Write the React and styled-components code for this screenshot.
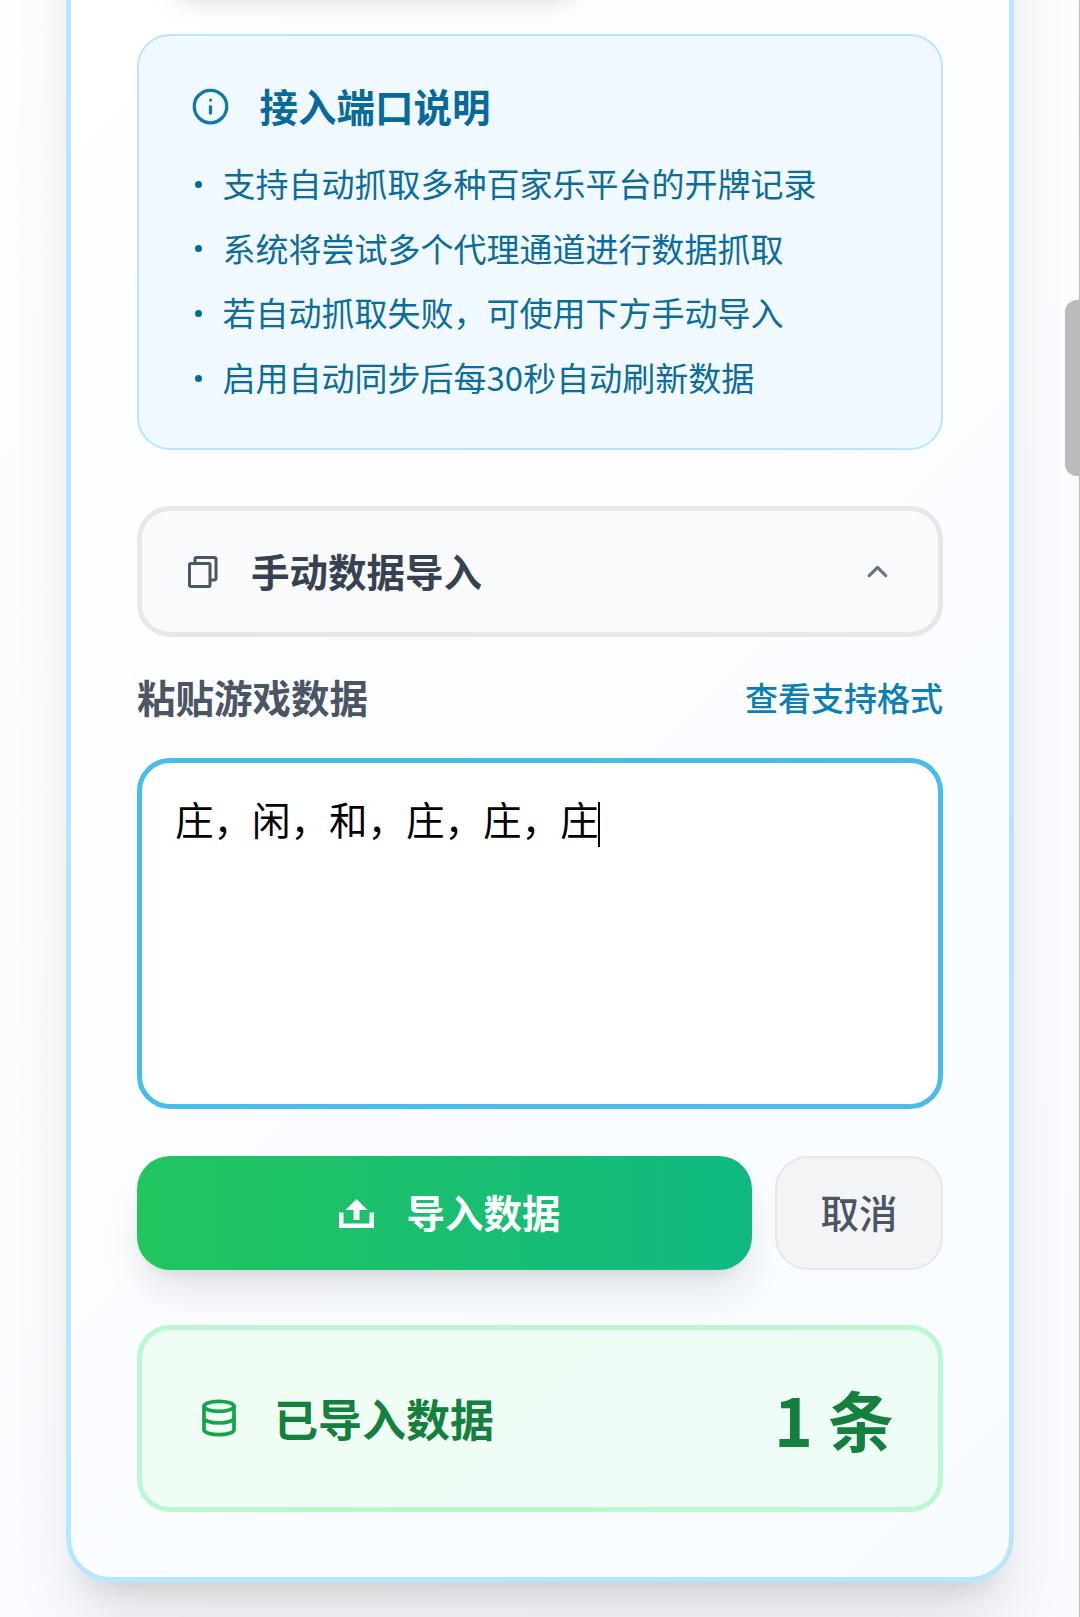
import React from "react";
import styled, { createGlobalStyle } from "styled-components";
import { Info, ChevronUp, Database } from "lucide-react";

const GlobalStyle = createGlobalStyle`
  html, body {
    margin: 0;
    padding: 0;
    height: 1617px;
    overflow: hidden;
    background: #fafbff;
  }
  * {
    box-sizing: border-box;
  }
  body {
    font-family: "Noto Sans CJK SC", "Noto Sans", sans-serif;
  }
`;

const Page = styled.div`
  position: relative;
  height: 1617px;
  overflow: hidden;
  background: linear-gradient(135deg, #fdfdff 0%, #f9fafe 100%);
`;

// the page is scrolled, so the top of the card sits above the window
const Scroller = styled.div`
  margin-top: -201px;
  padding: 0 66px;
`;

const Card = styled.div`
  border: 5px solid #bae6fd;
  border-radius: 44px;
  background: linear-gradient(135deg, #ffffff 0%, #f7fbff 100%);
  box-shadow: 0 55px 69px -14px rgba(0, 0, 0, 0.1),
    0 22px 27px -16px rgba(0, 0, 0, 0.1);
  padding: 0 66px 65px;
`;

const CutOffButton = styled.div`
  width: 420px;
  height: 190px;
  margin: 0 0 40px 28px;
  background: #fff;
  border-radius: 33px;
  box-shadow: 0 11px 22px rgba(0, 0, 0, 0.1);
`;

const InfoBox = styled.section`
  height: 416px;
  padding: 41px 50px 40px 55px;
  border: 2.5px solid #bae6fd;
  border-radius: 33px;
  background: #f0f9ff;
`;

const InfoTitle = styled.h3`
  display: flex;
  align-items: center;
  gap: 29.5px;
  margin: 0 0 18px -3px;
  font-size: 38.5px;
  line-height: 56px;
  font-weight: 700;
  color: #086a99;

  svg {
    margin-top: 3px;
  }
`;

const InfoList = styled.ul`
  list-style: none;
  margin: 0;
  padding: 0 0 0 1px;
`;

const InfoItem = styled.li`
  display: flex;
  align-items: center;
  gap: 20.5px;
  height: 64.6px;
  font-size: 33px;
  color: #0c6c9b;

  &::before {
    content: "";
    width: 7px;
    height: 7px;
    border-radius: 50%;
    background: #086a99;
    transform: translateY(1px);
  }
`;

const Collapse = styled.button`
  display: flex;
  align-items: center;
  width: 100%;
  height: 131px;
  margin-top: 56px;
  padding: 0 44px 0 46px;
  border: 5px solid #e5e7eb;
  border-radius: 33px;
  background: #f9fafb;
  color: #374151;
  font: inherit;
  font-size: 38.5px;
  font-weight: 700;
`;

const CollapseLabel = styled.span`
  flex: 1;
  margin-left: 33px;
  padding-bottom: 4px;
  text-align: left;
`;

const LabelRow = styled.div`
  display: flex;
  align-items: center;
  justify-content: space-between;
  height: 56px;
  margin-top: 31px;
`;

const FieldLabel = styled.label`
  font-size: 38.5px;
  font-weight: 700;
  color: #4b5563;
`;

const FormatLink = styled.a`
  padding-top: 1px;
  font-size: 33px;
  font-weight: 500;
  color: #0a80b5;
`;

const TextBox = styled.div`
  height: 351px;
  margin-top: 34px;
  padding: 27px 33px;
  border: 5px solid #4abcec;
  border-radius: 33px;
  background: #fff;
  color: #000;
  font-size: 38.5px;
  line-height: 56px;
`;

const Caret = styled.span`
  display: inline-block;
  width: 2.5px;
  height: 45px;
  margin-left: -1px;
  vertical-align: middle;
  background: #000;
`;

const ButtonRow = styled.div`
  display: flex;
  gap: 23px;
  margin-top: 47px;
`;

const ActionButton = styled.button`
  display: flex;
  align-items: center;
  justify-content: center;
  height: 114px;
  border-radius: 33px;
  font: inherit;
  font-size: 38.5px;
  font-weight: ${(p) => (p.$primary ? 700 : 500)};
  flex: ${(p) => (p.$primary ? 1 : "0 0 168px")};
  gap: ${(p) => (p.$primary ? "32px" : 0)};
  padding: ${(p) => (p.$primary ? "0 0 4px 11px" : "0 0 4px")};
  color: ${(p) => (p.$primary ? "#fff" : "#4b5563")};
  background: ${(p) =>
    p.$primary ? "linear-gradient(90deg, #22c55e, #10b981)" : "#f3f4f6"};
  border: ${(p) => (p.$primary ? "none" : "2.5px solid #e5e7eb")};
  box-shadow: ${(p) =>
    p.$primary
      ? "0 27px 41px -8px rgba(0, 0, 0, 0.1), 0 11px 16px -11px rgba(0, 0, 0, 0.1)"
      : "none"};

  svg {
    margin-top: 4px;
  }
`;

const ImportedBox = styled.section`
  display: flex;
  align-items: center;
  justify-content: space-between;
  height: 187px;
  margin-top: 55px;
  padding: 0 44px 2px 57px;
  border: 5px solid #bbf7d0;
  border-radius: 33px;
  background: linear-gradient(135deg, #f0fdf4, #ecfdf5);
  color: #15803d;
  font-weight: 700;
`;

const ImportedLabel = styled.div`
  display: flex;
  align-items: center;
  gap: 35px;
  font-size: 44px;

  svg {
    color: #16a34a;
  }
`;

const ImportedCount = styled.div`
  font-size: 66px;
`;

const ScrollTrack = styled.div`
  position: absolute;
  top: 0;
  right: 0;
  width: 1px;
  height: 100%;
  background: #bdbdbd;
`;

const ScrollThumb = styled.div`
  position: absolute;
  top: 300px;
  right: 0;
  width: 15px;
  height: 176px;
  border-radius: 12px 0 0 12px;
  background: #bbbbbb;
`;

const CopyIcon = () => (
  <svg width="30" height="32" viewBox="0 0 30 32" fill="none" stroke="#4b5563" strokeWidth="3">
    <rect x="1.5" y="7.500" width="20.500" height="23" rx="1.500" />
    <path d="M7 7V3a1.500 1.500 0 0 1 1.500-1.500h18A1.500 1.500 0 0 1 28 3v19.500a1.500 1.500 0 0 1-1.500 1.500H22" />
  </svg>
);

const UploadIcon = () => (
  <svg width="35" height="29" viewBox="0 0 35 29" fill="#fff">
    <path d="M17.500 0l11 11h-8v10h-6V11h-8z" />
    <path d="M2.250 13.500v13.250h30.500V13.500" fill="none" stroke="#fff" strokeWidth="4.500" />
  </svg>
);

const notes = [
  "支持自动抓取多种百家乐平台的开牌记录",
  "系统将尝试多个代理通道进行数据抓取",
  "若自动抓取失败，可使用下方手动导入",
  "启用自动同步后每30秒自动刷新数据",
];

export default function App() {
  return (
    <Page>
      <GlobalStyle />
      <Scroller>
        <Card>
          <CutOffButton aria-hidden="true" />
          <InfoBox>
            <InfoTitle>
              <Info size={39} strokeWidth={2} color="#0e7aa6" />
              接入端口说明
            </InfoTitle>
            <InfoList>
              {notes.map((note) => (
                <InfoItem key={note}>{note}</InfoItem>
              ))}
            </InfoList>
          </InfoBox>

          <Collapse>
            <CopyIcon />
            <CollapseLabel>手动数据导入</CollapseLabel>
            <ChevronUp size={33} color="#6b7280" strokeWidth={2.3} />
          </Collapse>

          <LabelRow>
            <FieldLabel>粘贴游戏数据</FieldLabel>
            <FormatLink>查看支持格式</FormatLink>
          </LabelRow>

          <TextBox>
            庄，闲，和，庄，庄，庄
            <Caret />
          </TextBox>

          <ButtonRow>
            <ActionButton $primary>
              <UploadIcon />
              导入数据
            </ActionButton>
            <ActionButton>取消</ActionButton>
          </ButtonRow>

          <ImportedBox>
            <ImportedLabel>
              <Database size={40} strokeWidth={2.2} />
              已导入数据
            </ImportedLabel>
            <ImportedCount>1 条</ImportedCount>
          </ImportedBox>
        </Card>
      </Scroller>
      <ScrollTrack />
      <ScrollThumb />
    </Page>
  );
}
